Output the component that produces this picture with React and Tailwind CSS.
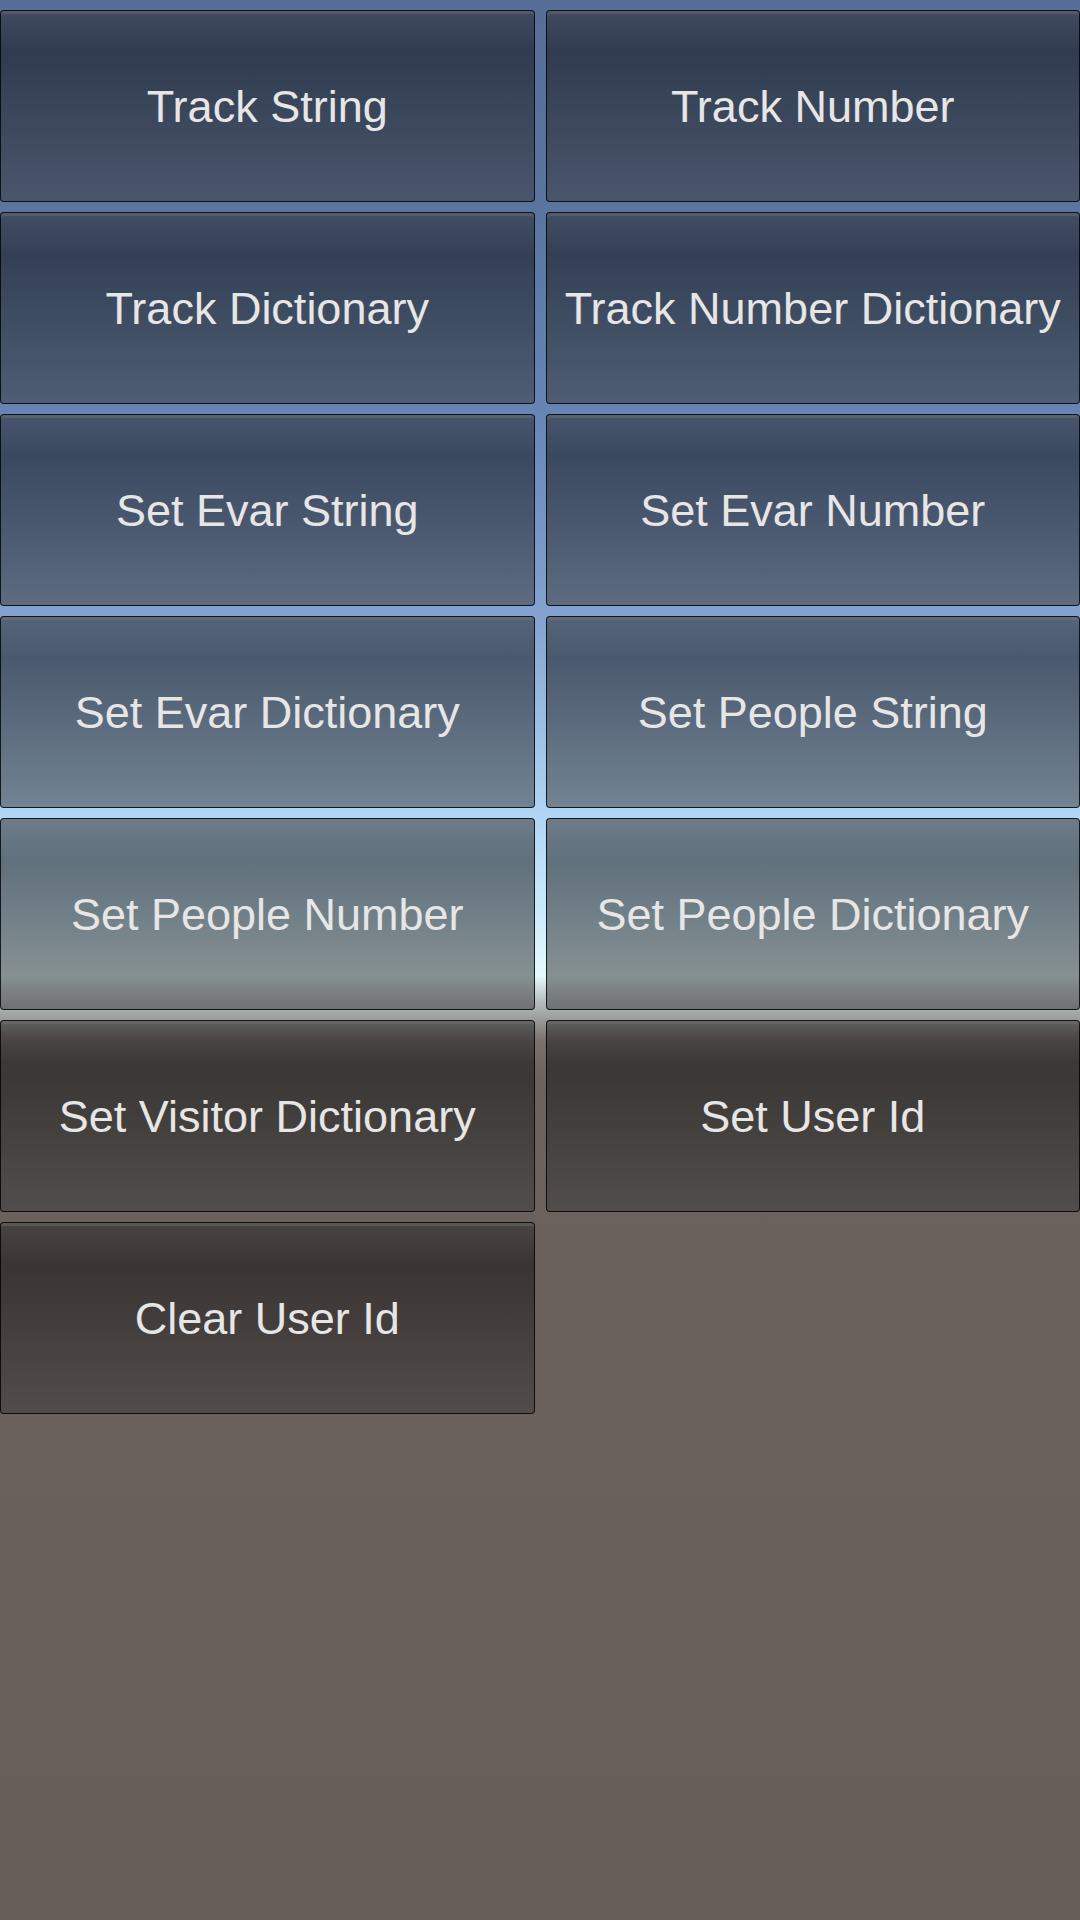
import React from 'react';

const buttons = [
  'Track String',
  'Track Number',
  'Track Dictionary',
  'Track Number Dictionary',
  'Set Evar String',
  'Set Evar Number',
  'Set Evar Dictionary',
  'Set People String',
  'Set People Number',
  'Set People Dictionary',
  'Set Visitor Dictionary',
  'Set User Id',
  'Clear User Id',
];

const App = () => {
  return (
    <div className="w-[1080px] h-[1920px] overflow-hidden bg-[linear-gradient(180deg,#566e98_0%,#5a74a0_10.5%,#6584b4_21%,#84a2d0_32%,#b0d4f4_42.3%,#c8e8fc_47%,#e6fbff_50.8%,#b8c0c0_52.1%,#a0a4a2_52.9%,#7a716c_54.2%,#6b625d_56.3%,#695f5a_100%)] font-['Liberation_Sans',Arial,sans-serif]">
      {/* ボタン一覧 */}
      <div className="grid grid-cols-2 gap-x-[11px] gap-y-[10px] pt-[10px]">
        {buttons.map((label) => (
          <button
            key={label}
            className="h-[192px] flex items-center justify-center rounded-[4px] border border-black/80 bg-[linear-gradient(180deg,rgba(44,44,44,0.53)_0%,rgba(14,14,14,0.53)_22%,rgba(60,60,60,0.53)_100%)] shadow-[inset_0_3px_0_rgba(120,120,120,0.35)] text-[45px] leading-none text-[#e6e6e6] whitespace-nowrap"
          >
            {label}
          </button>
        ))}
      </div>
    </div>
  );
};

export default App;
